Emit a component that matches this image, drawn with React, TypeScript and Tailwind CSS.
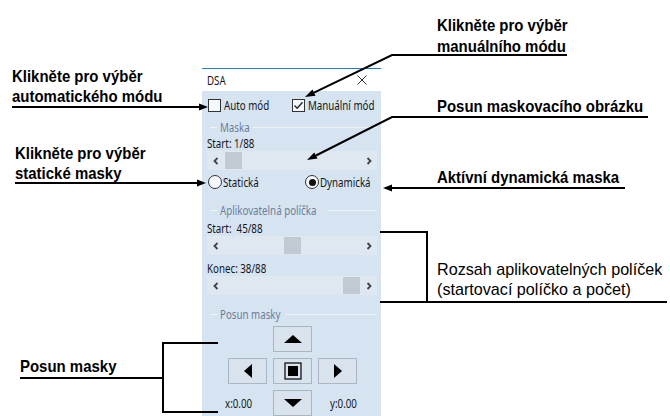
import type { ReactNode } from 'react';

function T({ children, className = '' }: { children: ReactNode; className?: string }) {
  return (
    <span className={`inline-block origin-left scale-x-[0.75] whitespace-nowrap ${className}`}>{children}</span>
  );
}

function Note({ children, className = '' }: { children: ReactNode; className?: string }) {
  return (
    <div
      className={`origin-left scale-x-[0.88] whitespace-nowrap font-['Liberation_Sans',Arial,sans-serif] text-[17px] font-bold text-black ${className}`}
    >
      {children}
    </div>
  );
}

function Legend({ label, w }: { label: string; w: string }) {
  return (
    <div className="flex h-4 items-center text-[#6c7d96]">
      <div className="ml-[3px] mr-[3px] h-px w-[7px] bg-[#eef3f8]" />
      <span className={`${w} shrink-0`}>
        <T>{label}</T>
      </span>
      <div className="h-px flex-1 bg-[#eef3f8]" />
    </div>
  );
}

function Chevron({ dir }: { dir: 'l' | 'r' }) {
  return (
    <svg width="6" height="8" viewBox="0 0 6 8">
      <path
        d={dir === 'l' ? 'M4.5 1 L1.5 4 L4.5 7' : 'M1.5 1 L4.5 4 L1.5 7'}
        stroke="#3f444a"
        strokeWidth="1.8"
        fill="none"
      />
    </svg>
  );
}

function Scroll({ thumb }: { thumb: string }) {
  return (
    <div className="flex h-[19px] bg-[#dfe7f0]">
      <div className="flex w-[17px] items-center justify-center">
        <Chevron dir="l" />
      </div>
      <div className="flex flex-1 items-center">
        <div className={`${thumb} h-[17px] w-[17px] bg-[#c1c9d3]`} />
      </div>
      <div className="flex w-[17px] items-center justify-center">
        <Chevron dir="r" />
      </div>
    </div>
  );
}

function Btn({ children }: { children: ReactNode }) {
  return (
    <div className="flex h-[26px] items-center justify-center border border-[#aab6c3] bg-[#d9e3ed]">
      {children}
    </div>
  );
}

export default function App() {
  return (
    <div className="relative flex h-[416px] w-[670px] overflow-hidden bg-white">
      {/* left notes */}
      <div className="flex w-[202px] shrink-0 flex-col">
        <Note className="ml-[12px] mt-[67px] leading-[20px]">
          <div>Klikněte pro výběr</div>
          <div>automatického módu</div>
        </Note>
        <Note className="ml-[15px] mt-[37px] leading-[20px]">
          <div>Klikněte pro výběr</div>
          <div>statické masky</div>
        </Note>
        <Note className="ml-[20px] mt-[173px] leading-[20px]">Posun masky</Note>
      </div>

      {/* dialog */}
      <div className="flex w-[179px] shrink-0 flex-col pt-[68px] font-['Noto_Sans',sans-serif] text-[13px] leading-[15px] text-[#151515]">
        <div className="flex h-[25px] items-center justify-between border-t border-[#1a7fd4] bg-white pl-[5px] pr-[14px]">
          <T>DSA</T>
          <svg width="10" height="10" viewBox="0 0 10 10">
            <path d="M0.5 0.5 L9.5 9.5 M9.5 0.5 L0.5 9.5" stroke="#333" strokeWidth="1" />
          </svg>
        </div>
        <div className="flex flex-1 flex-col bg-[#d6e4f2] pl-[5px] pr-[4px]">
          <div className="flex h-[28px] items-center">
            <div className="ml-px flex w-[84px] shrink-0 items-center gap-[3px]">
              <div className="h-[13px] w-[13px] shrink-0 border border-[#333] bg-[#f4f7fb]" />
              <T>Auto mód</T>
            </div>
            <div className="flex items-center gap-[3px]">
              <div className="flex h-[13px] w-[13px] shrink-0 items-center justify-center border border-[#333] bg-[#f4f7fb]">
                <svg width="11" height="11" viewBox="0 0 11 11">
                  <path d="M1.5 5.5 L4.2 8.3 L9.5 2.2" stroke="#222" strokeWidth="1.3" fill="none" />
                </svg>
              </div>
              <T>Manuální mód</T>
            </div>
          </div>
          <Legend label="Maska" w="w-[33px]" />
          <div className="flex h-4 items-center">
            <T>Start: 1/88</T>
          </div>
          <Scroll thumb="ml-[1px]" />
          <div className="flex h-[24px] items-center">
            <div className="ml-px flex w-[97px] shrink-0 items-center gap-px">
              <div className="h-[14px] w-[14px] shrink-0 rounded-full border border-[#333] bg-[#f4f7fb]" />
              <T>Statická</T>
            </div>
            <div className="flex items-center gap-px">
              <div className="flex h-[14px] w-[14px] shrink-0 items-center justify-center rounded-full border border-[#333] bg-[#f4f7fb]">
                <div className="h-[7px] w-[7px] rounded-full bg-[#111]" />
              </div>
              <T>Dynamická</T>
            </div>
          </div>
          <div className="mt-[8px]">
            <Legend label="Aplikovatelná políčka" w="w-[107px]" />
          </div>
          <div className="mt-[2px] flex h-4 items-center">
            <T>Start:&nbsp;&nbsp;45/88</T>
          </div>
          <Scroll thumb="ml-[60px]" />
          <div className="mt-[5px] flex h-4 items-center">
            <T>Konec: 38/88</T>
          </div>
          <Scroll thumb="ml-[119px]" />
          <div className="mt-[11px]">
            <Legend label="Posun masky" w="w-[65px]" />
          </div>
          <div className="ml-[21px] mt-[4px] grid grid-cols-[39px_39px_39px] gap-[6px]">
            <div />
            <Btn>
              <svg width="18" height="8" viewBox="0 0 18 8">
                <path d="M9 0 L18 8 L0 8 Z" fill="#000" />
              </svg>
            </Btn>
            <div />
            <Btn>
              <svg width="8" height="14" viewBox="0 0 8 14">
                <path d="M0 7 L8 0 L8 14 Z" fill="#000" />
              </svg>
            </Btn>
            <Btn>
              <svg width="18" height="18" viewBox="0 0 18 18">
                <rect x="1" y="1" width="16" height="16" fill="none" stroke="#000" strokeWidth="1.2" />
                <rect x="4" y="4" width="10" height="10" fill="#000" />
              </svg>
            </Btn>
            <Btn>
              <svg width="8" height="14" viewBox="0 0 8 14">
                <path d="M8 7 L0 0 L0 14 Z" fill="#000" />
              </svg>
            </Btn>
            <div className="-ml-[3px] flex items-center">
              <T>x:0.00</T>
            </div>
            <Btn>
              <svg width="18" height="8" viewBox="0 0 18 8">
                <path d="M0 0 L18 0 L9 8 Z" fill="#000" />
              </svg>
            </Btn>
            <div className="ml-[12px] flex items-center">
              <T>y:0.00</T>
            </div>
          </div>
        </div>
      </div>

      {/* right notes */}
      <div className="flex flex-1 flex-col pl-[56px]">
        <Note className="mt-[15px] leading-[21px]">
          <div>Klikněte pro výběr</div>
          <div>manuálního módu</div>
        </Note>
        <Note className="mt-[40px] leading-[20px]">Posun maskovacího obrázku</Note>
        <Note className="mt-[51px] leading-[20px]">Aktívní dynamická maska</Note>
        <div className="mt-[72px] origin-left scale-x-[0.95] whitespace-nowrap font-['Liberation_Sans',Arial,sans-serif] text-[17px] leading-[20px] text-black">
          <div>Rozsah aplikovatelných políček</div>
          <div>(startovací políčko a počet)</div>
        </div>
      </div>

      {/* leader lines */}
      <svg className="pointer-events-none absolute inset-0" width="670" height="416" viewBox="0 0 670 416">
        <g stroke="#000" strokeWidth="2" fill="none">
          <path d="M12 107 H200" />
          <path d="M15 183 H198" />
          <path d="M20 378 H163 M218 343 H163 V412 H218" />
          <path d="M567 55 H392 L314 92.6" />
          <path d="M648 117 H392 L316 155.5" />
          <path d="M625 188 H391" />
          <path d="M380 232 H427 V302 M380 302 H667" />
        </g>
        <g fill="#000">
          <polygon points="208,107 199,103.5 199,110.5" />
          <polygon points="206,183 197,179.5 197,186.5" />
          <polygon points="383,188 392,184.5 392,191.5" />
          <polygon points="305,97 315.5,95.8 312.5,89.5" />
          <polygon points="307,160 317.5,158.6 314.3,152.4" />
        </g>
      </svg>
    </div>
  );
}
